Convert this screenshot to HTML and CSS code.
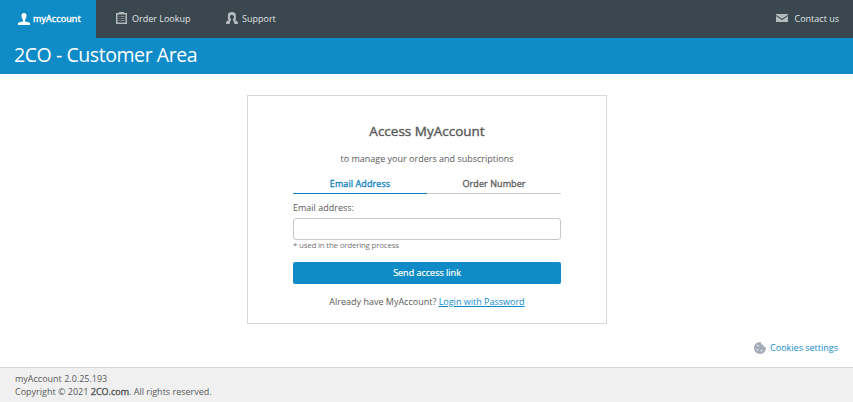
FILE: index.html
```html
<!DOCTYPE html>
<html lang="en">
<head>
<meta charset="utf-8">
<title>2CO - Customer Area</title>
<link rel="stylesheet" href="styles.css">
</head>
<body>
<nav class="topbar">
  <a class="nav-item active"><svg class="icon" width="12" height="12" viewBox="0 0 12 12"><path d="M6 0C4.300 0 3.500 1 3.500 2.800c0 1.700.7 2.900 1.400 3.700v2L0 9.700V12h12V9.700L7.100 8.500v-2c.7-.8 1.400-2 1.400-3.700C8.500 1 7.700 0 6 0z"/></svg><span class="strong brand">myAccount</span></a>
  <a class="nav-item lookup"><svg class="icon" width="11" height="12" viewBox="0 0 11 12"><path fill-rule="evenodd" d="M0 1h3V0h5v1h3v11H0zM1.500 2.500v8h8v-8z"/><path d="M2.500 4.500h1M4.500 4.500h4M2.500 6.500h1M4.500 6.500h4M2.500 8.500h1M4.500 8.500h4" stroke="currentColor" opacity=".6"/></svg><span>Order Lookup</span></a>
  <a class="nav-item support"><svg class="icon" width="12" height="12" viewBox="0 0 13 13"><path fill-rule="evenodd" d="M2 8V3.500C2 1.200 3.700 0 6.300 0s4.400 1.200 4.400 3.500V8L9.500 8.700l2.500 1q1 .5 1 3.300H9.200L8.200 10 7.500 9V7.500C8.500 6.500 9 5.500 8.500 4L5.500 3 4.300 4.200c0 2 .4 2.800 1.200 3.600V9L4.500 10 4 13H0q0-2.800 1-3.300L3.500 8.700z"/></svg><span>Support</span></a>
  <a class="nav-item contact"><svg class="icon" width="12" height="8" viewBox="0 0 12 8"><path d="M0 0h12v1L6 4.700 0 1zM0 2l6 3.900L12 2v6H0z"/></svg><span>Contact us</span></a>
</nav>
<header class="title-bar"><h1>2CO - Customer Area</h1></header>
<main>
  <section class="card">
    <h2>Access MyAccount</h2>
    <p class="intro">to manage your orders and subscriptions</p>
    <div class="tabs"><a class="tab selected">Email Address</a><a class="tab">Order Number</a></div>
    <label for="email">Email address:</label>
    <input id="email" type="text">
    <p class="hint">* used in the ordering process</p>
    <button type="button">Send access link</button>
    <p class="login">Already have MyAccount? <a>Login with Password</a></p>
  </section>
  <a class="cookies"><svg width="12" height="12" viewBox="0 0 12 12"><path fill="#a5adba" fill-rule="evenodd" d="M6 0l1 .2A2.500 2.500 0 0 0 9.300 3 2.500 2.500 0 0 0 11.900 5.200 6 6 0 1 1 6 0zM4 3a.8.8 0 1 0 0 1.600A.8.8 0 0 0 4 3zM3.500 7a.8.8 0 1 0 0 1.600.8.8 0 0 0 0-1.600zM7.500 8a.8.8 0 1 0 0 1.600.8.8 0 0 0 0-1.600z"/></svg><span>Cookies settings</span></a>
</main>
<footer><p class="version">myAccount 2.0.25.193</p><p class="copy">Copyright © 2021 <span class="strong">2CO.com</span>. All rights reserved.</p></footer>
</body>
</html>
```
FILE: styles.css
```css
* { box-sizing: border-box; }
body { margin: 0; height: 402px; display: flex; flex-direction: column; overflow: hidden; background: #fff; color: #5a5a5a; font: 9px/13px "Open Sans", sans-serif; }
h1, h2, p { margin: 0; font-weight: 400; }
.strong { -webkit-text-stroke: .4px currentColor; }
.brand { letter-spacing: .1px; }
.topbar { height: 38px; display: flex; background: #3a474f; color: #e1e4e6; }
.nav-item { display: flex; align-items: center; height: 38px; }
.nav-item span { padding-bottom: 2px; }
.active { width: 96px; padding-left: 18px; background: #0f8bc7; color: #fff; }
.icon { fill: currentColor; color: #b5babd; flex: none; }
.active .icon { color: #fff; margin: 0 3px 1px 0; }
.lookup { padding-left: 20px; width: 130px; }
.lookup .icon { margin: 0 5px 2px 0; }
.support .icon { margin: 0 4px 2px 0; }
.contact { margin-left: auto; padding-right: 14px; }
.contact .icon { margin: 0 7px 2px 0; }
.title-bar { height: 36px; padding-left: 14px; background: #0f8bc7; color: #fff; }
h1 { font-size: 19.5px; line-height: 34px; letter-spacing: -.43px; }
main { flex: 1; display: flex; flex-direction: column; padding-top: 21px; }
.card { width: 360px; height: 229px; margin-left: 247px; padding: 0 45px; border: 1px solid #d8d8d8; text-align: center; }
h2 { margin-top: 26px; font-size: 13.5px; line-height: 18px; -webkit-text-stroke: .4px currentColor; }
.intro { margin-top: 12px; }
.tabs { display: flex; margin-top: 10px; height: 19px; }
.tab { flex: 1; line-height: 17px; letter-spacing: .08px; border-bottom: 1px solid #ccc; -webkit-text-stroke: .3px currentColor; }
.tab.selected { color: #0f7fc0; border-bottom-color: #0f7fc0; }
label { display: block; margin-top: 7px; text-align: left; }
input { display: block; width: 268px; height: 22px; margin-top: 4px; border: 1px solid #c8c8c8; border-radius: 3px; background: #fff; }
.hint { font-size: 8px; line-height: 11px; margin-top: -1px; letter-spacing: -.24px; text-align: left; color: #777; }
button { display: block; width: 268px; height: 22px; margin-top: 12px; padding: 0; border: 0; border-radius: 2px; background: #0f8bc7; color: #fff; font: 9px/20px "Open Sans", sans-serif; -webkit-text-stroke: .2px currentColor; }
.login { margin-top: 11px; }
.login a { color: #0f8bc7; text-decoration: underline; }
.cookies { display: flex; align-items: center; align-self: flex-end; margin: 17px 15px 0 0; gap: 4px; color: #0f8bc7; }
footer { height: 35px; padding: 4px 15px; background: #f0f0f0; border-top: 1px solid #d8d8d8; }
.copy { line-height: 14px; }
```
